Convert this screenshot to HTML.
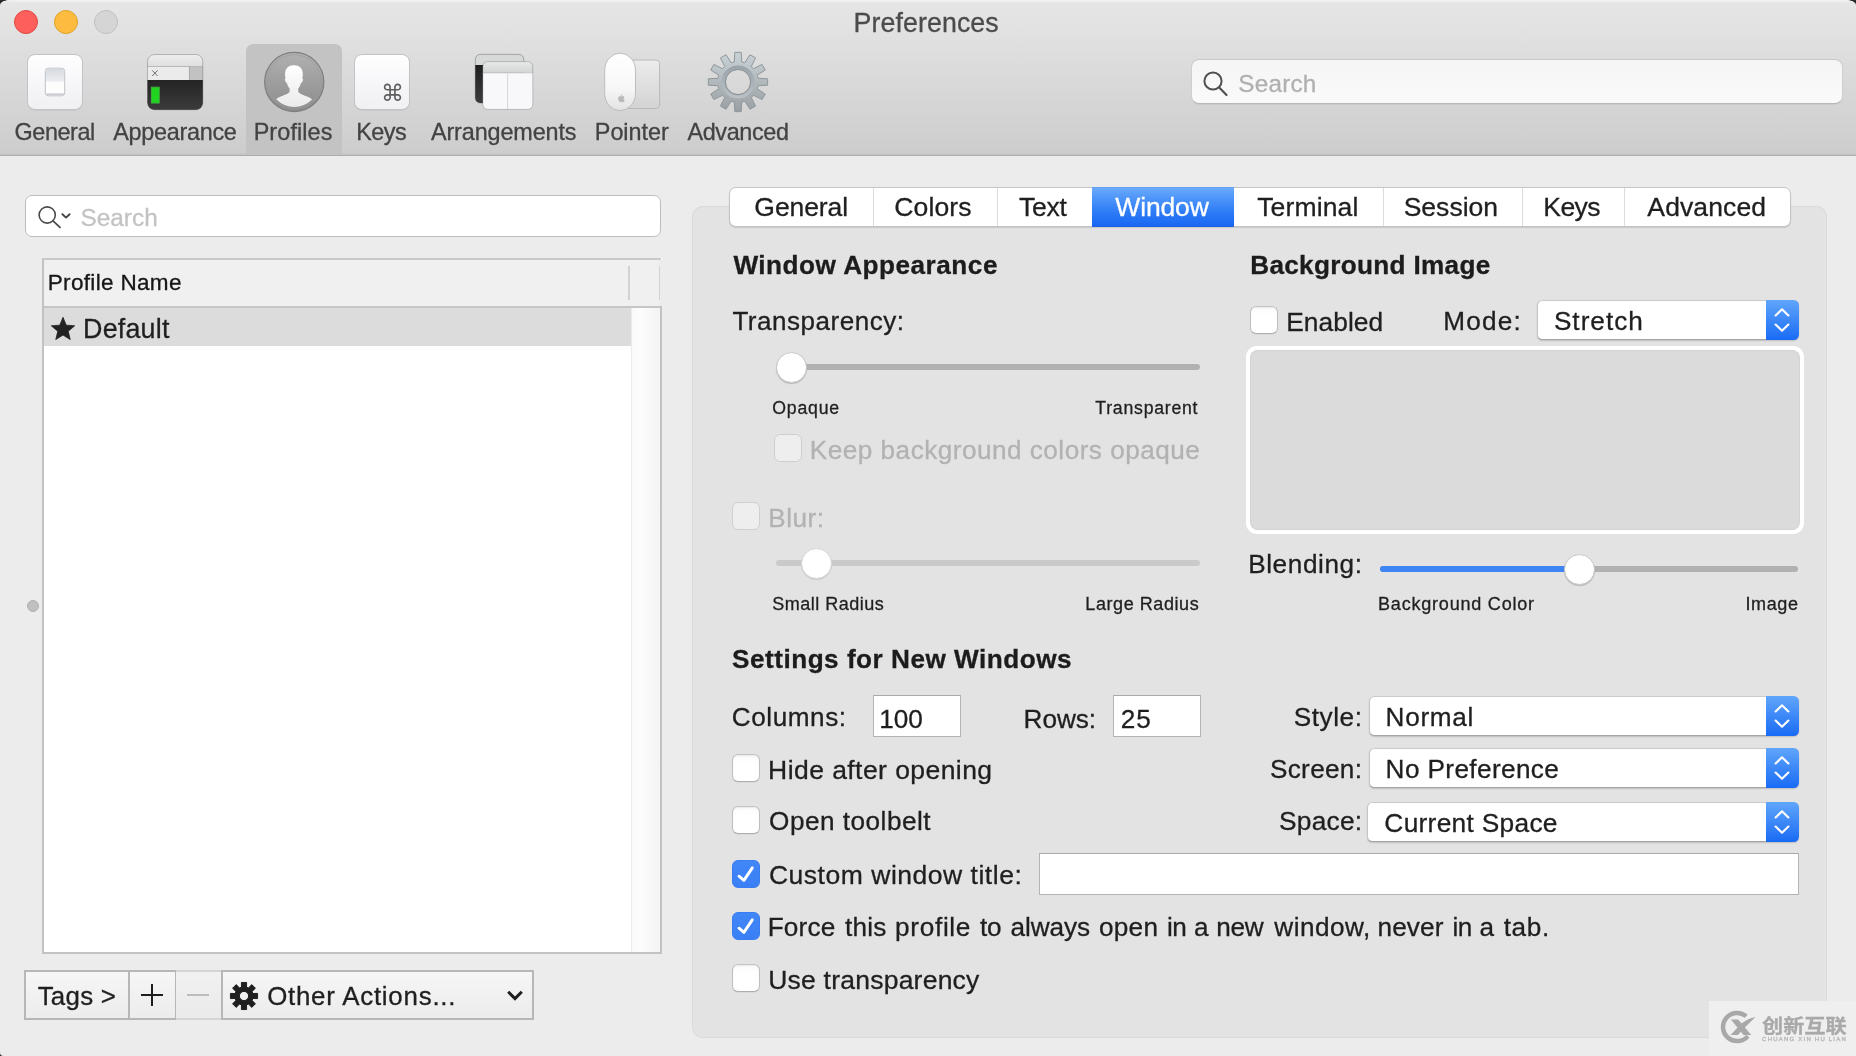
<!DOCTYPE html>
<html lang="en">
<head>
<meta charset="utf-8">
<title>Preferences</title>
<style>
*{box-sizing:border-box;margin:0;padding:0}
html,body{width:1856px;height:1056px;overflow:hidden;background:#ececec}
.crn{position:absolute;width:12px;height:8px;background:#2a2a2a}
body{font-family:"Liberation Sans","Noto Sans CJK SC",sans-serif;color:#1d1d1d;position:relative}
.abs,.t,#win *{position:absolute}
#win{will-change:transform;position:absolute;left:0;top:0;width:1856px;height:1056px;background:#ececec;border-radius:11px 11px 0 3.5px / 5.5px 5.5px 0 3.5px;overflow:hidden}
.t{white-space:nowrap;line-height:1;display:block;-webkit-text-stroke:.3px currentColor}
/* toolbar */
#tb{left:0;top:0;width:1856px;height:155.5px;background:linear-gradient(#e6e6e6 0,#e3e3e3 22px,#cdcdcd 153px,#c4c4c4 154px);border-bottom:1.5px solid #adadad}
#tbhl{left:0;top:0;width:1856px;height:3px;background:linear-gradient(#f2f2f2,#f0f0f0 1px,rgba(236,236,236,0))}
.tl{width:24px;height:24px;border-radius:12px;top:10px}
#selbg{left:246px;top:44px;width:96px;height:110px;background:#c3c3c3;border-radius:7px 7px 0 0}
#tsearch{left:1191px;top:59px;width:652px;height:45px;border-radius:8px;background:linear-gradient(#f5f5f5,#fafafa);border:1px solid #cfcfcf;border-top-color:#c9c9c9;border-bottom-color:#b7b7b7;box-shadow:0 1px 1px rgba(0,0,0,.05)}
/* left */
#lsearch{left:25px;top:195px;width:636px;height:42px;border-radius:7px;background:#fff;border:1.5px solid #bdbdbd}
#tbl{left:42px;top:258px;width:620px;height:696px;border:2px solid #c2c2c2;border-top:0;border-right:0;background:#fff}
#tbltop{left:42px;top:258px;width:618.5px;height:2px;background:#c9c9c9}
#tblright{left:660px;top:306px;width:2px;height:648px;background:#c2c2c2}
#tblhead{left:44px;top:260px;width:618px;height:46px;background:linear-gradient(90deg,#f0f0f0 614px,#ececec 616px)}
#tblheadline{left:44px;top:306px;width:616px;height:2px;background:#c6c6c6}
#row{left:44px;top:308px;width:587px;height:38px;background:#dcdcdc}
#scr{left:630.5px;top:308px;width:29.5px;height:644px;background:linear-gradient(90deg,#fafafa,#fdfdfd 30%,#f3f3f3);border-left:1px solid #ececec}
.hsep{width:1.5px;top:266px;height:34px;background:#d2d2d2}
.btn{top:970px;height:50px;border:2px solid #b7b7b7;background:linear-gradient(#f6f6f6,#ececec)}
/* right panel */
#panel{left:693px;top:207px;width:1133px;height:830px;background:#e3e3e3;border-radius:10px;box-shadow:0 0 0 1px #dadada}
#tabs{left:729px;top:187px;width:1062px;height:40px;border-radius:7px;background:#fff;border:1px solid #c4c4c4;box-shadow:0 1px 1px rgba(0,0,0,.12)}
#tabsel{left:1092px;top:187px;width:142px;height:40px;background:linear-gradient(#5b98ee 0,#6aa9fb 1px,#4690f8 35%,#2c7af6 65%,#1b69f3 38px,#1c5fdc 40px)}
.tsep{top:188px;width:1px;height:38px;background:#dcdcdc}
.cb{width:28px;height:28px;border-radius:6px;background:linear-gradient(#fafafa,#fff 30%);border:1px solid #bebebe;border-top-color:#c4c4c4;border-bottom-color:#adadad;box-shadow:inset 0 1px 1.5px rgba(0,0,0,.07),0 .5px .5px rgba(0,0,0,.08)}
.cb.dis{background:#eeeeee;border-color:#cfcfcf;box-shadow:none}
.cb.on{background:linear-gradient(#4187f7,#3a7ff5);border-color:#3a7df0;box-shadow:none}
.track{height:6px;border-radius:3px;background:#b1b1b1}
.knob{width:31px;height:31px;border-radius:50%;background:#fff;border:1px solid #c9c9c9;box-shadow:0 1px 1px rgba(0,0,0,.18)}
.pop{border-radius:5.5px;background:#fff;border:1px solid #c6c6c6;border-top-color:#cbcbcb;border-bottom-color:#a6a6a6;box-shadow:0 1px 1.5px rgba(0,0,0,.16)}
.pop i{right:-1px;top:-1px;width:33.5px;height:40px;border-radius:0 5.5px 5.5px 0;background:linear-gradient(#5fa6fb,#1a6bf5)}
.fld{background:#fff;border:1px solid #b4b4b4;border-top-color:#a9a9a9}
#well{left:1246px;top:346px;width:558px;height:188px;border-radius:11px;background:#fff}
#wellin{left:1250px;top:350px;width:550px;height:180px;border-radius:8px;background:#dbdbdb;box-shadow:inset 0 0 2px rgba(0,0,0,.12)}
#wm{left:1709px;top:1001px;width:147px;height:55px;background:#efefef}
</style>
</head>
<body>
<div class="crn" style="left:0;top:0"></div><div class="crn" style="left:1844px;top:0"></div><div class="crn" style="left:0;top:1048px"></div>
<div id="win">
<!-- ===== toolbar ===== -->
<div id="tb"></div><div id="tbhl"></div>
<div class="tl" style="left:14px;background:#fd605c;border:1px solid #e2463f"></div>
<div class="tl" style="left:54px;background:#fdbc3f;border:1px solid #e0a227"></div>
<div class="tl" style="left:94px;background:#d5d5d5;border:1px solid #c1c1c1"></div>
<div id="selbg"></div>

<svg class="abs" style="left:25px;top:52px" width="60" height="60" viewBox="0 0 60 60">
<defs>
<linearGradient id="gA" x1="0" y1="0" x2="0" y2="1"><stop offset="0" stop-color="#fefeff"/><stop offset="1" stop-color="#f0f0f3"/></linearGradient>
<linearGradient id="gB" x1="0" y1="0" x2="0" y2="1"><stop offset="0" stop-color="#d6d9de"/><stop offset="1" stop-color="#eceef1"/></linearGradient>
</defs>
<rect x="2.6" y="3.4" width="55" height="55" rx="7.5" fill="#000" opacity=".10"/>
<rect x="2.5" y="2.5" width="55" height="55" rx="7.5" fill="url(#gA)" stroke="#c3c3c7" stroke-width="1"/>
<rect x="20.3" y="16.2" width="19.4" height="27.6" rx="3.2" fill="#fdfdfe" stroke="#bfc1c6" stroke-width="1"/>
<path d="M21 19.2 a2.6 2.6 0 0 1 2.6 -2.5 h12.8 a2.6 2.6 0 0 1 2.6 2.5 v10.6 h-18 z" fill="url(#gB)"/>
<rect x="21" y="41.2" width="18" height="2" rx="1" fill="#cfd1d5"/>
</svg>
<svg class="abs" style="left:145px;top:52px" width="60" height="60" viewBox="0 0 60 60">
<defs>
<clipPath id="cA"><rect x="2.5" y="2.5" width="55.3" height="55.2" rx="7"/></clipPath>
<linearGradient id="gC" x1="0" y1="0" x2="0" y2="1"><stop offset="0" stop-color="#f1f1f1"/><stop offset="1" stop-color="#dedede"/></linearGradient>
<linearGradient id="gD" x1="0" y1="0" x2="0" y2="1"><stop offset="0" stop-color="#242424"/><stop offset="1" stop-color="#3d3d3d"/></linearGradient>
</defs>
<g clip-path="url(#cA)">
<rect x="0" y="0" width="60" height="14.5" fill="url(#gC)"/>
<rect x="0" y="14.5" width="60" height="14" fill="#ebebeb"/>
<rect x="44.4" y="14.5" width="16" height="14" fill="#c2c2c2"/>
<rect x="0" y="14" width="60" height="1" fill="#b9b9b9"/>
<rect x="43.9" y="14.5" width="1" height="14" fill="#a8a8a8"/>
<rect x="0" y="28" width="60" height="32" fill="url(#gD)"/>
<path d="M7.2 18.4 l5.4 5.6 M12.6 18.4 l-5.4 5.6" stroke="#5e5e5e" stroke-width=".9" fill="none"/>
<rect x="6.4" y="35.2" width="7.8" height="15.8" fill="#20d41f" stroke="#3eb43c" stroke-width="1"/>
</g>
<rect x="2.5" y="2.5" width="55.3" height="55.2" rx="7" fill="none" stroke="#000" stroke-opacity=".22" stroke-width="1"/>
</svg>
<svg class="abs" style="left:262px;top:50px" width="64" height="64" viewBox="0 0 64 64">
<defs>
<linearGradient id="gE" x1="0" y1="0" x2="0" y2="1"><stop offset="0" stop-color="#b1b1b1"/><stop offset="1" stop-color="#8b8b8b"/></linearGradient>
<linearGradient id="gF" x1="0" y1="0" x2="0" y2="1"><stop offset="0" stop-color="#ffffff"/><stop offset="1" stop-color="#e9e9e9"/></linearGradient>
<clipPath id="cB"><circle cx="32.25" cy="31.8" r="25.2"/></clipPath>
</defs>
<circle cx="32.25" cy="32" r="29.6" fill="url(#gE)" stroke="#7d7d7d" stroke-width="1.2"/>
<circle cx="32.25" cy="31.6" r="26.8" fill="none" stroke="#9d9d9d" stroke-width="1" opacity=".7"/>
<g clip-path="url(#cB)" fill="url(#gF)"><g transform="translate(32.25 36) scale(.915 .93) translate(-32.25 -36)">
<path d="M32.2 13.6 c5.6 0 9.4 3.4 9.4 9.4 c0 2 -.2 3.2 -.6 4.600 c.8 .3 1 1.300 .5 2.800 c-.4 1.300 -1 2.300 -1.900 2.500 c-.7 2.700 -1.900 4.600 -3 5.800 v3.400 c1.400 2.300 6.400 3.800 10.400 5.400 c3.400 1.400 5.600 3 6.400 5.600 v9 h-43 v-9 c.8 -2.600 3 -4.200 6.400 -5.600 c4 -1.600 9 -3.100 10.400 -5.400 v-3.400 c-1.100 -1.200 -2.300 -3.100 -3 -5.800 c-.9 -.2 -1.500 -1.200 -1.900 -2.500 c-.5 -1.500 -.3 -2.500 .5 -2.800 c-.4 -1.400 -.6 -2.600 -.6 -4.600 c0 -6 3.800 -9.400 9.400 -9.400 z"/>
</g></g>
</svg>
<svg class="abs" style="left:352px;top:52px" width="60" height="60" viewBox="0 0 60 60">
<rect x="2.6" y="3.4" width="55" height="55" rx="7.5" fill="#000" opacity=".10"/>
<rect x="2.5" y="2.5" width="55" height="55" rx="7.5" fill="url(#gA)" stroke="#c3c3c7" stroke-width="1"/>
<text x="40.4" y="49.4" text-anchor="middle" font-family="'DejaVu Sans',sans-serif" font-size="23" fill="#606060">⌘</text>
</svg>
<svg class="abs" style="left:473px;top:52px" width="62" height="60" viewBox="0 0 62 60">
<defs>
<linearGradient id="gG" x1="0" y1="0" x2="0" y2="1"><stop offset="0" stop-color="#e9ebeb"/><stop offset="1" stop-color="#d3d5d5"/></linearGradient>
<linearGradient id="gH" x1="0" y1="0" x2="0" y2="1"><stop offset="0" stop-color="#1f1f1f"/><stop offset="1" stop-color="#3e3e3e"/></linearGradient>
<clipPath id="cC"><rect x="2.3" y="2.4" width="48.5" height="48.6" rx="5"/></clipPath>
<clipPath id="cD"><rect x="9.8" y="9.6" width="50" height="47.8" rx="5"/></clipPath>
</defs>
<g clip-path="url(#cC)"><rect x="0" y="0" width="60" height="13" fill="#d7d9d9"/><rect x="0" y="13" width="60" height="40" fill="url(#gH)"/></g>
<rect x="2.3" y="2.4" width="48.5" height="48.6" rx="5" fill="none" stroke="#000" stroke-opacity=".25"/>
<g clip-path="url(#cD)"><rect x="9" y="9" width="52" height="11.8" fill="url(#gG)"/><rect x="9" y="20.8" width="52" height="40" fill="#f8f8fa"/>
<rect x="9" y="20.4" width="52" height=".9" fill="#c4c6c6"/><rect x="34.1" y="20.8" width="1" height="40" fill="#d6d6d8"/></g>
<rect x="9.8" y="9.6" width="50" height="47.8" rx="5" fill="none" stroke="#000" stroke-opacity=".2"/>
</svg>
<svg class="abs" style="left:602px;top:50px" width="62" height="64" viewBox="0 0 62 64">
<defs>
<linearGradient id="gI" x1="0" y1="0" x2="0" y2="1"><stop offset="0" stop-color="#ececec"/><stop offset="1" stop-color="#d3d3d3"/></linearGradient>
<linearGradient id="gJ" x1="0" y1="0" x2="0" y2="1"><stop offset="0" stop-color="#ffffff"/><stop offset=".6" stop-color="#f7f7f7"/><stop offset="1" stop-color="#e3e3e3"/></linearGradient>
</defs>
<rect x="22" y="10" width="35.6" height="48.5" rx="3.5" fill="url(#gI)" stroke="#b9b9b9" stroke-width="1"/>
<rect x="2.7" y="3.2" width="30.8" height="57.4" rx="15.4" ry="17" fill="url(#gJ)" stroke="#bdbdbd" stroke-width="1"/>
<g fill="#b9b9b9" transform="translate(19.2 48.6) scale(.86) translate(-19.2 -49.4)"><path d="M18.6 46.4 c.9 -.1 1.800 -.8 1.900 -1.900 c-1 0 -1.900 .8 -1.900 1.900 z"/>
<path d="M15.600 49.3 c0 -1.700 1.100 -2.800 2.300 -2.800 c.7 0 1.100 .35 1.600 .35 c.5 0 .9 -.35 1.700 -.35 c.7 0 1.400 .4 1.800 1 c-1.500 .9 -1.300 3.100 .3 3.700 c-.4 1.100 -1.300 2.400 -2.200 2.400 c-.6 0 -.8 -.35 -1.500 -.35 c-.7 0 -1 .35 -1.500 .35 c-1.100 0 -2.500 -2.300 -2.500 -4.300 z"/></g>
</svg>
<svg class="abs" style="left:706px;top:50px" width="64" height="64" viewBox="0 0 64 64">
<defs>
<linearGradient id="gK" x1="0" y1="0" x2="0" y2="1"><stop offset="0" stop-color="#c9d2d6"/><stop offset=".5" stop-color="#b1b9bd"/><stop offset="1" stop-color="#9a9fa3"/></linearGradient>
<linearGradient id="gL" x1="0" y1="0" x2="0" y2="1"><stop offset="0" stop-color="#9aa4aa"/><stop offset="1" stop-color="#b9c1c6"/></linearGradient>
</defs>
<path d="M28.25 11.95 L28.79 2.37 L35.21 2.37 L35.75 11.95 L38.78 12.76 L44.03 4.74 L49.59 7.95 L45.28 16.51 L47.49 18.72 L56.05 14.41 L59.26 19.97 L51.24 25.22 L52.05 28.25 L61.63 28.79 L61.63 35.21 L52.05 35.75 L51.24 38.78 L59.26 44.03 L56.05 49.59 L47.49 45.28 L45.28 47.49 L49.59 56.05 L44.03 59.26 L38.78 51.24 L35.75 52.05 L35.21 61.63 L28.79 61.63 L28.25 52.05 L25.22 51.24 L19.97 59.26 L14.41 56.05 L18.72 47.49 L16.51 45.28 L7.95 49.59 L4.74 44.03 L12.76 38.78 L11.95 35.75 L2.37 35.21 L2.37 28.79 L11.95 28.25 L12.76 25.22 L4.74 19.97 L7.95 14.41 L16.51 18.72 L18.72 16.51 L14.41 7.95 L19.97 4.74 L25.22 12.76 Z M19.40 32.00 a12.6 12.6 0 1 0 25.2 0 a12.6 12.6 0 1 0 -25.2 0 Z" fill="url(#gK)" fill-rule="evenodd" stroke="#8f979c" stroke-width="1" stroke-linejoin="round"/>
<circle cx="32" cy="32" r="14.9" fill="none" stroke="url(#gL)" stroke-width="3.4"/>
<circle cx="32" cy="32" r="12.7" fill="none" stroke="#8a9196" stroke-width=".9" opacity=".8"/>
</svg>
<div id="tsearch"></div>
<svg class="abs" style="left:1200px;top:68px" width="30" height="30" viewBox="0 0 30 30"><circle cx="13" cy="13" r="8.6" fill="none" stroke="#505050" stroke-width="2"/><path d="M19.2 19.5 L26.5 27" stroke="#505050" stroke-width="2.2" stroke-linecap="round"/></svg>

<!-- ===== left column ===== -->
<div id="lsearch"></div>
<svg class="abs" style="left:36px;top:204px" width="38" height="26" viewBox="0 0 38 26"><circle cx="11.2" cy="11" r="8.1" fill="none" stroke="#4b4b4b" stroke-width="1.6"/><path d="M17 16.8 L24 23.3" stroke="#4b4b4b" stroke-width="1.8" stroke-linecap="round"/><path d="M26.4 10.2 L30 13.6 L33.600 10.2" fill="none" stroke="#444" stroke-width="1.9" stroke-linecap="round" stroke-linejoin="round"/></svg>
<div id="tbl"></div><div id="tblhead"></div><div id="tbltop"></div><div id="tblright"></div><div id="tblheadline"></div>
<div class="hsep" style="left:628px"></div><div class="hsep" style="left:658.5px"></div>
<div id="row"></div><div id="scr"></div>
<svg class="abs" style="left:50px;top:316px" width="26" height="26" viewBox="0 0 26 26"><path d="M13.00 1.30 L16.23 9.15 L24.70 9.80 L18.23 15.30 L20.23 23.55 L13.00 19.10 L5.77 23.55 L7.77 15.30 L1.30 9.80 L9.77 9.15 Z" fill="#222" stroke="#222" stroke-width=".8" stroke-linejoin="round"/></svg>
<div class="abs" style="left:27px;top:600px;width:12px;height:12px;border-radius:50%;background:#c0c0c0;border:1px solid #b0b0b0"></div>
<!-- bottom buttons -->
<div class="btn" style="left:24px;width:106px"></div>
<div class="btn" style="left:128px;width:48.5px"></div>
<div class="btn" style="left:176px;width:45px;border-color:#d4d4d4;border-left-width:0;border-right-width:0;background:linear-gradient(#f1f1f1,#eaeaea)"></div>
<div class="btn" style="left:220.5px;width:313px"></div>
<svg class="abs" style="left:140px;top:983px" width="24" height="24" viewBox="0 0 24 24"><path d="M12 1v22M1 12h22" stroke="#1e1e1e" stroke-width="2"/></svg>
<div class="abs" style="left:187px;top:993.5px;width:22px;height:2px;background:#bcbcbc"></div>
<svg class="abs" style="left:228.75px;top:980.75px" width="30" height="30" viewBox="0 0 30 30">
<path d="M12.52 6.04 L12.39 1.45 L17.61 1.45 L17.48 6.04 L19.58 6.91 L22.74 3.57 L26.43 7.26 L23.09 10.42 L23.96 12.52 L28.55 12.39 L28.55 17.61 L23.96 17.48 L23.09 19.58 L26.43 22.74 L22.74 26.43 L19.58 23.09 L17.48 23.96 L17.61 28.55 L12.39 28.55 L12.52 23.96 L10.42 23.09 L7.26 26.43 L3.57 22.74 L6.91 19.58 L6.04 17.48 L1.45 17.61 L1.45 12.39 L6.04 12.52 L6.91 10.42 L3.57 7.26 L7.26 3.57 L10.42 6.91 Z M10.40 15.00 a4.6 4.6 0 1 0 9.2 0 a4.6 4.6 0 1 0 -9.2 0 Z" fill="#1f1f1f" fill-rule="evenodd" stroke="#1f1f1f" stroke-width="1" stroke-linejoin="round"/></svg>
<svg class="abs" style="left:505px;top:988px" width="20" height="14" viewBox="0 0 20 14"><path d="M3.2 3.8 L10 10.6 L16.8 3.8" fill="none" stroke="#1e1e1e" stroke-width="3" stroke-linejoin="miter"/></svg>

<!-- ===== right panel ===== -->
<div id="panel"></div>
<div id="tabs"></div><div id="tabsel"></div>
<div class="tsep" style="left:872.5px"></div><div class="tsep" style="left:996.5px"></div>
<div class="tsep" style="left:1383px"></div><div class="tsep" style="left:1522px"></div><div class="tsep" style="left:1624px"></div>

<!-- transparency slider -->
<div class="track" style="left:776px;top:364px;width:424px"></div>
<div class="knob" style="left:775.5px;top:351.5px"></div>
<div class="cb dis" style="left:774px;top:434px"></div>
<div class="cb dis" style="left:732px;top:502px"></div>
<div class="track" style="left:776px;top:560px;width:424px;background:#cacaca"></div>
<div class="knob" style="left:800.5px;top:547.5px;border-color:#d6d6d6;box-shadow:0 1px 1px rgba(0,0,0,.1)"></div>

<!-- background image -->
<div class="cb" style="left:1250px;top:306px"></div>
<div class="pop" style="left:1537px;top:300px;width:262px;height:40px"><i></i></div>
<div id="well"></div><div id="wellin"></div>
<div class="track" style="left:1380px;top:566px;width:418px"></div>
<div class="track" style="left:1380px;top:566px;width:200px;background:#3f84f5"></div>
<div class="knob" style="left:1563.5px;top:553.5px"></div>

<!-- settings for new windows -->
<div class="fld" style="left:873px;top:695px;width:88px;height:42px"></div>
<div class="fld" style="left:1113px;top:695px;width:88px;height:42px"></div>
<div class="pop" style="left:1369px;top:696px;width:430px;height:40px"><i></i></div>
<div class="pop" style="left:1369px;top:748px;width:430px;height:40px"><i></i></div>
<div class="pop" style="left:1367px;top:802px;width:432px;height:40px"><i></i></div>
<div class="cb" style="left:732px;top:754px"></div>
<div class="cb" style="left:732px;top:806px"></div>
<div class="cb on" style="left:732px;top:860px"></div>
<div class="cb on" style="left:732px;top:912px"></div>
<div class="cb" style="left:732px;top:964px"></div>
<div class="fld" style="left:1039px;top:853px;width:760px;height:42px"></div>
<svg class="abs" style="left:1772.3px;top:300px" width="20" height="40" viewBox="0 0 20 40"><path d="M3.6 15.5 L10 9.3 L16.4 15.5 M3.6 24.5 L10 30.7 L16.4 24.5" fill="none" stroke="#fff" stroke-width="2.1" stroke-linecap="round" stroke-linejoin="round"/></svg><svg class="abs" style="left:1772.3px;top:696px" width="20" height="40" viewBox="0 0 20 40"><path d="M3.6 15.5 L10 9.3 L16.4 15.5 M3.6 24.5 L10 30.7 L16.4 24.5" fill="none" stroke="#fff" stroke-width="2.1" stroke-linecap="round" stroke-linejoin="round"/></svg><svg class="abs" style="left:1772.3px;top:748px" width="20" height="40" viewBox="0 0 20 40"><path d="M3.6 15.5 L10 9.3 L16.4 15.5 M3.6 24.5 L10 30.7 L16.4 24.5" fill="none" stroke="#fff" stroke-width="2.1" stroke-linecap="round" stroke-linejoin="round"/></svg><svg class="abs" style="left:1772.3px;top:802px" width="20" height="40" viewBox="0 0 20 40"><path d="M3.6 15.5 L10 9.3 L16.4 15.5 M3.6 24.5 L10 30.7 L16.4 24.5" fill="none" stroke="#fff" stroke-width="2.1" stroke-linecap="round" stroke-linejoin="round"/></svg>
<svg class="abs" style="left:732px;top:860px" width="28" height="28" viewBox="0 0 28 28"><path d="M7.0 16.2 L11.9 20.4 L20.3 7.9" fill="none" stroke="#fff" stroke-width="2.9" stroke-linecap="round" stroke-linejoin="round"/></svg><svg class="abs" style="left:732px;top:912px" width="28" height="28" viewBox="0 0 28 28"><path d="M7.0 16.2 L11.9 20.4 L20.3 7.9" fill="none" stroke="#fff" stroke-width="2.9" stroke-linecap="round" stroke-linejoin="round"/></svg>

<!-- watermark -->
<div id="wm"></div>
<svg class="abs" style="left:1718px;top:1008px" width="42" height="40" viewBox="0 0 42 40">
<path d="M28.2 8.2 A14.1 14.1 0 1 0 29.9 28.1" fill="none" stroke="#a8a8a8" stroke-width="4.5"/>
<path d="M12.900 11.5 h7.200 l13.200 15.400 h-7.800 z" fill="#a8a8a8"/>
<path d="M12.500 26.900 h7.400 L27.800 18.400 L37.500 8.900 C32 10 27.400 12.300 23.400 15.600 Z" fill="#a8a8a8"/>
</svg>

<span class="t" style="left:853.62px;top:10.00px;font-size:26.74px;letter-spacing:0.094px;color:#4b4b4b">Preferences</span>
<span class="t" style="left:14.53px;top:121.00px;font-size:23.40px;letter-spacing:-0.416px;color:#434343">General</span>
<span class="t" style="left:113.32px;top:121.00px;font-size:23.40px;letter-spacing:-0.292px;color:#434343">Appearance</span>
<span class="t" style="left:253.64px;top:121.00px;font-size:23.40px;letter-spacing:0.117px;color:#434343">Profiles</span>
<span class="t" style="left:356.25px;top:121.00px;font-size:23.40px;letter-spacing:-0.550px;color:#434343">Keys</span>
<span class="t" style="left:430.93px;top:121.00px;font-size:23.40px;letter-spacing:-0.117px;color:#434343">Arrangements</span>
<span class="t" style="left:594.82px;top:121.00px;font-size:23.40px;letter-spacing:-0.028px;color:#434343">Pointer</span>
<span class="t" style="left:687.41px;top:121.00px;font-size:23.40px;letter-spacing:-0.348px;color:#434343">Advanced</span>
<span class="t" style="left:1238.26px;top:72.00px;font-size:24.27px;letter-spacing:0.244px;color:#b0b0b0">Search</span>
<span class="t" style="left:80.44px;top:206.00px;font-size:24.35px;letter-spacing:0.039px;color:#c3c3c3">Search</span>
<span class="t" style="left:47.75px;top:272.00px;font-size:22.53px;letter-spacing:0.325px;color:#161616">Profile Name</span>
<span class="t" style="left:83.07px;top:316.00px;font-size:26.89px;letter-spacing:0.190px;color:#1f1f1f">Default</span>
<span class="t" style="left:37.65px;top:984.00px;font-size:25.87px;letter-spacing:0.270px;color:#1f1f1f">Tags &gt;</span>
<span class="t" style="left:267.13px;top:984.00px;font-size:25.87px;letter-spacing:0.771px;color:#1f1f1f">Other Actions...</span>
<span class="t" style="left:754.36px;top:194.00px;font-size:26.53px;letter-spacing:-0.109px;color:#1f1f1f">General</span>
<span class="t" style="left:894.33px;top:194.00px;font-size:26.53px;letter-spacing:0.094px;color:#1f1f1f">Colors</span>
<span class="t" style="left:1019.02px;top:194.00px;font-size:26.53px;letter-spacing:-0.267px;color:#1f1f1f">Text</span>
<span class="t" style="left:1115.34px;top:194.00px;font-size:26.53px;letter-spacing:-0.163px;color:#ffffff">Window</span>
<span class="t" style="left:1257.21px;top:194.00px;font-size:26.53px;letter-spacing:0.141px;color:#1f1f1f">Terminal</span>
<span class="t" style="left:1403.65px;top:194.00px;font-size:26.53px;letter-spacing:0.024px;color:#1f1f1f">Session</span>
<span class="t" style="left:1543.29px;top:194.00px;font-size:26.53px;letter-spacing:-0.550px;color:#1f1f1f">Keys</span>
<span class="t" style="left:1647.37px;top:194.00px;font-size:26.53px;letter-spacing:0.097px;color:#1f1f1f">Advanced</span>
<span class="t" style="left:733.39px;top:252.00px;font-size:26.16px;letter-spacing:0.501px;color:#1c1c1c;font-weight:bold">Window Appearance</span>
<span class="t" style="left:1250.23px;top:252.00px;font-size:26.16px;letter-spacing:0.302px;color:#1c1c1c;font-weight:bold">Background Image</span>
<span class="t" style="left:732.00px;top:646.00px;font-size:26.16px;letter-spacing:0.495px;color:#1c1c1c;font-weight:bold">Settings for New Windows</span>
<span class="t" style="left:732.40px;top:308.00px;font-size:26.02px;letter-spacing:0.524px;color:#1f1f1f">Transparency:</span>
<span class="t" style="left:772.29px;top:400.00px;font-size:17.66px;letter-spacing:0.816px;color:#1f1f1f">Opaque</span>
<span class="t" style="left:1095.34px;top:400.00px;font-size:17.66px;letter-spacing:0.765px;color:#1f1f1f">Transparent</span>
<span class="t" style="left:809.85px;top:437.00px;font-size:26.16px;letter-spacing:0.477px;color:#b2b2b2">Keep background colors opaque</span>
<span class="t" style="left:768.15px;top:505.00px;font-size:26.16px;letter-spacing:0.550px;color:#b2b2b2">Blur:</span>
<span class="t" style="left:772.18px;top:595.00px;font-size:18.02px;letter-spacing:0.500px;color:#1f1f1f">Small Radius</span>
<span class="t" style="left:1085.35px;top:595.00px;font-size:18.02px;letter-spacing:0.559px;color:#1f1f1f">Large Radius</span>
<span class="t" style="left:1286.14px;top:309.00px;font-size:26.31px;letter-spacing:0.087px;color:#1f1f1f">Enabled</span>
<span class="t" style="left:1443.19px;top:308.00px;font-size:26.16px;letter-spacing:1.220px;color:#1f1f1f">Mode:</span>
<span class="t" style="left:1553.91px;top:308.00px;font-size:26.16px;letter-spacing:1.006px;color:#1f1f1f">Stretch</span>
<span class="t" style="left:1248.15px;top:551.00px;font-size:26.16px;letter-spacing:0.597px;color:#1f1f1f">Blending:</span>
<span class="t" style="left:1378.06px;top:595.00px;font-size:18.02px;letter-spacing:0.786px;color:#1f1f1f">Background Color</span>
<span class="t" style="left:1745.50px;top:595.00px;font-size:18.02px;letter-spacing:0.594px;color:#1f1f1f">Image</span>
<span class="t" style="left:731.80px;top:704.00px;font-size:26.16px;letter-spacing:0.547px;color:#1f1f1f">Columns:</span>
<span class="t" style="left:879.25px;top:706.00px;font-size:26.16px;letter-spacing:-0.094px;color:#1f1f1f">100</span>
<span class="t" style="left:1023.61px;top:706.00px;font-size:26.16px;letter-spacing:-0.065px;color:#1f1f1f">Rows:</span>
<span class="t" style="left:1120.66px;top:706.00px;font-size:26.16px;letter-spacing:1.139px;color:#1f1f1f">25</span>
<span class="t" style="left:1293.67px;top:704.00px;font-size:26.16px;letter-spacing:0.591px;color:#1f1f1f">Style:</span>
<span class="t" style="left:1385.61px;top:704.00px;font-size:26.16px;letter-spacing:0.693px;color:#1f1f1f">Normal</span>
<span class="t" style="left:1269.96px;top:756.00px;font-size:26.16px;letter-spacing:0.315px;color:#1f1f1f">Screen:</span>
<span class="t" style="left:1385.61px;top:756.00px;font-size:26.16px;letter-spacing:0.382px;color:#1f1f1f">No Preference</span>
<span class="t" style="left:1279.07px;top:808.00px;font-size:26.31px;letter-spacing:0.238px;color:#1f1f1f">Space:</span>
<span class="t" style="left:1384.37px;top:810.00px;font-size:26.31px;letter-spacing:0.297px;color:#1f1f1f">Current Space</span>
<span class="t" style="left:768.12px;top:757.00px;font-size:26.53px;letter-spacing:0.427px;color:#1f1f1f">Hide after opening</span>
<span class="t" style="left:769.06px;top:808.00px;font-size:26.16px;letter-spacing:0.493px;color:#1f1f1f">Open toolbelt</span>
<span class="t" style="left:768.93px;top:862.00px;font-size:26.53px;letter-spacing:0.511px;color:#1f1f1f">Custom window title:</span>
<span class="t" style="left:767.63px;top:914.00px;font-size:26.16px;letter-spacing:0.200px;color:#1f1f1f">Force</span>
<span class="t" style="left:844.94px;top:914.00px;font-size:26.16px;letter-spacing:0.202px;color:#1f1f1f">this</span>
<span class="t" style="left:895.08px;top:914.00px;font-size:26.16px;letter-spacing:0.682px;color:#1f1f1f">profile</span>
<span class="t" style="left:980.10px;top:914.00px;font-size:26.16px;letter-spacing:-0.424px;color:#1f1f1f">to</span>
<span class="t" style="left:1010.60px;top:914.00px;font-size:26.16px;letter-spacing:-0.117px;color:#1f1f1f">always</span>
<span class="t" style="left:1099.00px;top:914.00px;font-size:26.16px;letter-spacing:0.264px;color:#1f1f1f">open</span>
<span class="t" style="left:1167.07px;top:914.00px;font-size:26.16px;letter-spacing:-0.550px;color:#1f1f1f">in</span>
<span class="t" style="left:1194.06px;top:914.00px;font-size:26.16px;letter-spacing:-0.550px;color:#1f1f1f">a</span>
<span class="t" style="left:1216.35px;top:914.00px;font-size:26.16px;letter-spacing:-0.323px;color:#1f1f1f">new</span>
<span class="t" style="left:1274.29px;top:914.00px;font-size:26.16px;letter-spacing:0.476px;color:#1f1f1f">window,</span>
<span class="t" style="left:1377.45px;top:914.00px;font-size:26.16px;letter-spacing:0.150px;color:#1f1f1f">never</span>
<span class="t" style="left:1452.62px;top:914.00px;font-size:26.16px;letter-spacing:-0.550px;color:#1f1f1f">in</span>
<span class="t" style="left:1479.39px;top:914.00px;font-size:26.16px;letter-spacing:-0.550px;color:#1f1f1f">a</span>
<span class="t" style="left:1503.78px;top:914.00px;font-size:26.16px;letter-spacing:0.584px;color:#1f1f1f">tab.</span>
<span class="t" style="left:768.14px;top:967.00px;font-size:26.53px;letter-spacing:0.229px;color:#1f1f1f">Use transparency</span>
<span class="t" style="left:1761.70px;top:1015.00px;font-size:19.00px;letter-spacing:0.000px;color:#a9a9a9;font-weight:bold;font-family:'Noto Sans CJK SC','Liberation Sans',sans-serif;transform:scaleX(1.115);transform-origin:0 0">创新互联</span>
<span class="t" style="left:1762.10px;top:1036.00px;font-size:6.00px;letter-spacing:1.218px;color:#b6b6b6">CHUANG XIN HU LIAN</span>
</div>
</body>
</html>
